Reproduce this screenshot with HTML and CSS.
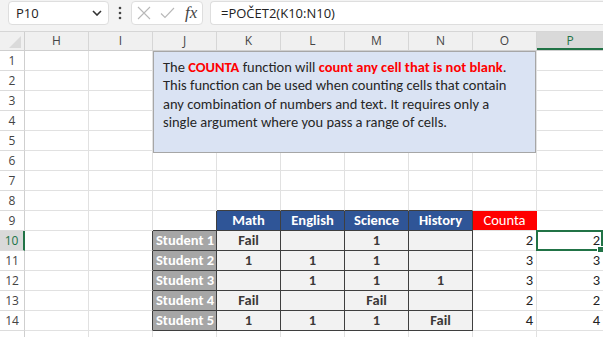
FILE: index.html
```html
<!DOCTYPE html>
<html>
<head>
<meta charset="utf-8">
<link rel="stylesheet" href="styles.css">
</head>
<body>
<div class="topbar">
  <div class="namebox">
    <span class="nb-text">P10</span>
    <svg class="chev" width="10" height="6" viewBox="0 0 10 6"><path d="M1 1 L5 5 L9 1" fill="none" stroke="#333" stroke-width="1.6"/></svg>
  </div>
  <div class="dots">
    <svg width="4" height="14" viewBox="0 0 4 14"><circle cx="2" cy="2" r="1.3" fill="#444"/><circle cx="2" cy="7" r="1.3" fill="#444"/><circle cx="2" cy="12" r="1.3" fill="#444"/></svg>
  </div>
  <div class="fxbox">
    <svg width="14" height="14" viewBox="0 0 14 14"><path d="M1 1 L13 13 M13 1 L1 13" stroke="#b8b8b8" stroke-width="1.1" fill="none"/></svg>
    <svg width="15" height="12" viewBox="0 0 15 12"><path d="M1 6.5 L5 10.5 L14 1" stroke="#b8b8b8" stroke-width="1.1" fill="none"/></svg>
    <span class="fx">fx</span>
  </div>
  <div class="formula">=POČET2(K10:N10)</div>
</div>

<div class="sheet">
  <div class="hdr">
    <div class="corner"><svg width="12" height="12" viewBox="0 0 12 12"><polygon points="12,0 12,12 0,12" fill="#dadada"/></svg></div>
    <div class="ch">H</div><div class="ch">I</div><div class="ch">J</div><div class="ch">K</div><div class="ch">L</div><div class="ch">M</div><div class="ch">N</div><div class="ch">O</div><div class="ch ch-sel">P</div>
  </div>

  <div class="row"><div class="rh">1</div><div class="c"></div><div class="c"></div><div class="c"></div><div class="c"></div><div class="c"></div><div class="c"></div><div class="c"></div><div class="c"></div><div class="c"></div></div>
  <div class="row"><div class="rh">2</div><div class="c"></div><div class="c"></div><div class="c"></div><div class="c"></div><div class="c"></div><div class="c"></div><div class="c"></div><div class="c"></div><div class="c"></div></div>
  <div class="row"><div class="rh">3</div><div class="c"></div><div class="c"></div><div class="c"></div><div class="c"></div><div class="c"></div><div class="c"></div><div class="c"></div><div class="c"></div><div class="c"></div></div>
  <div class="row"><div class="rh">4</div><div class="c"></div><div class="c"></div><div class="c"></div><div class="c"></div><div class="c"></div><div class="c"></div><div class="c"></div><div class="c"></div><div class="c"></div></div>
  <div class="row"><div class="rh">5</div><div class="c"></div><div class="c"></div><div class="c"></div><div class="c"></div><div class="c"></div><div class="c"></div><div class="c"></div><div class="c"></div><div class="c"></div></div>
  <div class="row"><div class="rh">6</div><div class="c"></div><div class="c"></div><div class="c"></div><div class="c"></div><div class="c"></div><div class="c"></div><div class="c"></div><div class="c"></div><div class="c"></div></div>
  <div class="row"><div class="rh">7</div><div class="c"></div><div class="c"></div><div class="c"></div><div class="c"></div><div class="c"></div><div class="c"></div><div class="c"></div><div class="c"></div><div class="c"></div></div>
  <div class="row"><div class="rh">8</div><div class="c"></div><div class="c"></div><div class="c"></div><div class="c db"></div><div class="c db"></div><div class="c db"></div><div class="c db"></div><div class="c"></div><div class="c"></div></div>
  <div class="row"><div class="rh">9</div><div class="c"></div><div class="c"></div><div class="c db dr"></div><div class="c th">Math</div><div class="c th">English</div><div class="c th">Science</div><div class="c th">History</div><div class="c tc">Counta</div><div class="c"></div></div>
  <div class="row"><div class="rh rh-sel">10</div><div class="c"></div><div class="c dr"></div><div class="c st">Student 1</div><div class="c td">Fail</div><div class="c td"></div><div class="c td">1</div><div class="c td"></div><div class="c num">2</div><div class="c num sel">2</div></div>
  <div class="row"><div class="rh">11</div><div class="c"></div><div class="c dr"></div><div class="c st">Student 2</div><div class="c td">1</div><div class="c td">1</div><div class="c td">1</div><div class="c td"></div><div class="c num">3</div><div class="c num">3</div></div>
  <div class="row"><div class="rh">12</div><div class="c"></div><div class="c dr"></div><div class="c st">Student 3</div><div class="c td"></div><div class="c td">1</div><div class="c td">1</div><div class="c td">1</div><div class="c num">3</div><div class="c num">3</div></div>
  <div class="row"><div class="rh">13</div><div class="c"></div><div class="c dr"></div><div class="c st">Student 4</div><div class="c td">Fail</div><div class="c td"></div><div class="c td">Fail</div><div class="c td"></div><div class="c num">2</div><div class="c num">2</div></div>
  <div class="row"><div class="rh">14</div><div class="c"></div><div class="c dr"></div><div class="c st">Student 5</div><div class="c td">1</div><div class="c td">1</div><div class="c td">1</div><div class="c td">Fail</div><div class="c num">4</div><div class="c num">4</div></div>
  <div class="row"><div class="rh"></div><div class="c"></div><div class="c"></div><div class="c"></div><div class="c"></div><div class="c"></div><div class="c"></div><div class="c"></div><div class="c"></div><div class="c"></div></div>

  <div class="note">
    <p class="note-text">The <b class="red">COUNTA</b> function will <b class="red">count any cell that is not blank</b>. This function can be used when counting cells that contain any combination of numbers and text. It requires only a single argument where you pass a range of cells.</p>
  </div>
</div>
</body>
</html>
```

FILE: styles.css
```css
html, body {
  margin: 0;
  padding: 0;
  background: #ffffff;
  overflow: hidden;
}

body {
  width: 603px;
  height: 337px;
  font-family: Carlito, Lato, "Liberation Sans", sans-serif;
}

/* ---------- formula bar ---------- */
.topbar {
  height: 32px;
  box-sizing: border-box;
  background: #f3f3f3;
  border-bottom: 1px solid #d6d6d6;
  display: flex;
  align-items: flex-start;
  padding: 1px 0 0 8px;
}

.namebox {
  width: 101px;
  height: 24px;
  box-sizing: border-box;
  background: #ffffff;
  border: 1px solid #dedede;
  border-radius: 4px;
  display: flex;
  align-items: center;
  justify-content: space-between;
  padding: 0 6px 0 7px;
  font-family: "Open Sans", "Noto Sans", sans-serif;
  font-size: 13px;
  color: #222;
}

.dots {
  width: 22px;
  height: 24px;
  display: flex;
  align-items: center;
  justify-content: center;
}

.fxbox {
  width: 72px;
  height: 24px;
  box-sizing: border-box;
  background: #ffffff;
  border: 1px solid #dedede;
  border-radius: 4px;
  display: flex;
  align-items: center;
  padding: 0 4px 0 5px;
  gap: 9px;
}

.fx {
  font-family: "Liberation Serif", "DejaVu Serif", serif;
  font-style: italic;
  font-size: 17px;
  color: #444;
  margin-left: 1px;
}

.formula {
  flex: 1;
  height: 24px;
  box-sizing: border-box;
  margin-left: 7px;
  background: #ffffff;
  border: 1px solid #dedede;
  border-right: none;
  border-radius: 4px 0 0 4px;
  padding-left: 10px;
  display: flex;
  align-items: center;
  font-family: "Open Sans", "Noto Sans", sans-serif;
  font-size: 13px;
  color: #222;
}

/* ---------- grid ---------- */
.sheet {
  position: relative;
}

.hdr {
  display: flex;
  height: 19px;
  box-sizing: border-box;
  background: #f0f0f0;
  border-bottom: 1px solid #cfcfcf;
}

.corner {
  width: 25px;
  flex: none;
  box-sizing: border-box;
  border-right: 1px solid #cfcfcf;
  display: flex;
  align-items: flex-end;
  justify-content: flex-end;
  padding: 0 3px 2px 0;
}

.ch {
  width: 64px;
  flex: none;
  box-sizing: border-box;
  border-right: 1px solid #d6d6d6;
  text-align: center;
  font-family: "Open Sans", "Noto Sans", sans-serif;
  font-size: 12px;
  line-height: 18px;
  color: #444;
}

.ch-sel {
  flex: 1;
  border-right: none;
  background: #d9d9d9;
  color: #217346;
  box-shadow: inset 0 -2px 0 #217346;
}

.row {
  display: flex;
  height: 20px;
}

.rh {
  width: 25px;
  flex: none;
  box-sizing: border-box;
  border-right: 1px solid #cfcfcf;
  border-bottom: 1px solid #dcdcdc;
  text-align: center;
  font-family: "Open Sans", "Noto Sans", sans-serif;
  font-size: 12px;
  line-height: 19px;
  color: #444;
}

.rh-sel {
  background: #d9d9d9;
  color: #217346;
  border-right: 2px solid #217346;
}

.c {
  width: 64px;
  flex: none;
  box-sizing: border-box;
  border-right: 1px solid #e1e1e1;
  border-bottom: 1px solid #e1e1e1;
  font-size: 14.5px;
  line-height: 19px;
  color: #222;
  white-space: nowrap;
  overflow: visible;
}

.row .c:last-child {
  flex: 1;
  border-right: none;
}

.db { border-bottom-color: #3f3f3f; }
.dr { border-right-color: #3f3f3f; }

.th {
  background: #2f5597;
  color: #ffffff;
  font-weight: bold;
  text-align: center;
  border-right-color: #3f3f3f;
  border-bottom-color: #3f3f3f;
}

.tc {
  background: #ff0000;
  color: #ffffff;
  text-align: center;
  border-right-color: #ff0000;
  border-bottom-color: #e1e1e1;
}

.st {
  background: #a6a6a6;
  color: #ffffff;
  font-weight: bold;
  padding-left: 3px;
  border-right-color: #3f3f3f;
  border-bottom-color: #3f3f3f;
}

.td {
  background: #f2f2f2;
  color: #3b3838;
  font-weight: bold;
  text-align: center;
  border-right-color: #3f3f3f;
  border-bottom-color: #3f3f3f;
}

.num {
  text-align: right;
  padding-right: 3px;
  color: #222;
}

.sel {
  position: relative;
}

.sel::after {
  content: "";
  position: absolute;
  left: -1px;
  top: -1px;
  right: 0;
  bottom: -1px;
  border: 2px solid #217346;
}

.sel::before {
  content: "";
  position: absolute;
  right: -1px;
  bottom: -3px;
  width: 5px;
  height: 5px;
  background: #217346;
  border: 1px solid #ffffff;
  z-index: 2;
}

/* ---------- text box shape ---------- */
.note {
  position: absolute;
  left: 153px;
  top: 19px;
  width: 383px;
  height: 102px;
  box-sizing: border-box;
  background: #dae3f3;
  border: 1px solid #a6a6a6;
  padding: 6px 18px 0 9px;
}

.note-text {
  margin: 0;
  font-size: 14.5px;
  line-height: 18.3px;
  color: #262626;
}

.red {
  color: #ff0000;
}
```
